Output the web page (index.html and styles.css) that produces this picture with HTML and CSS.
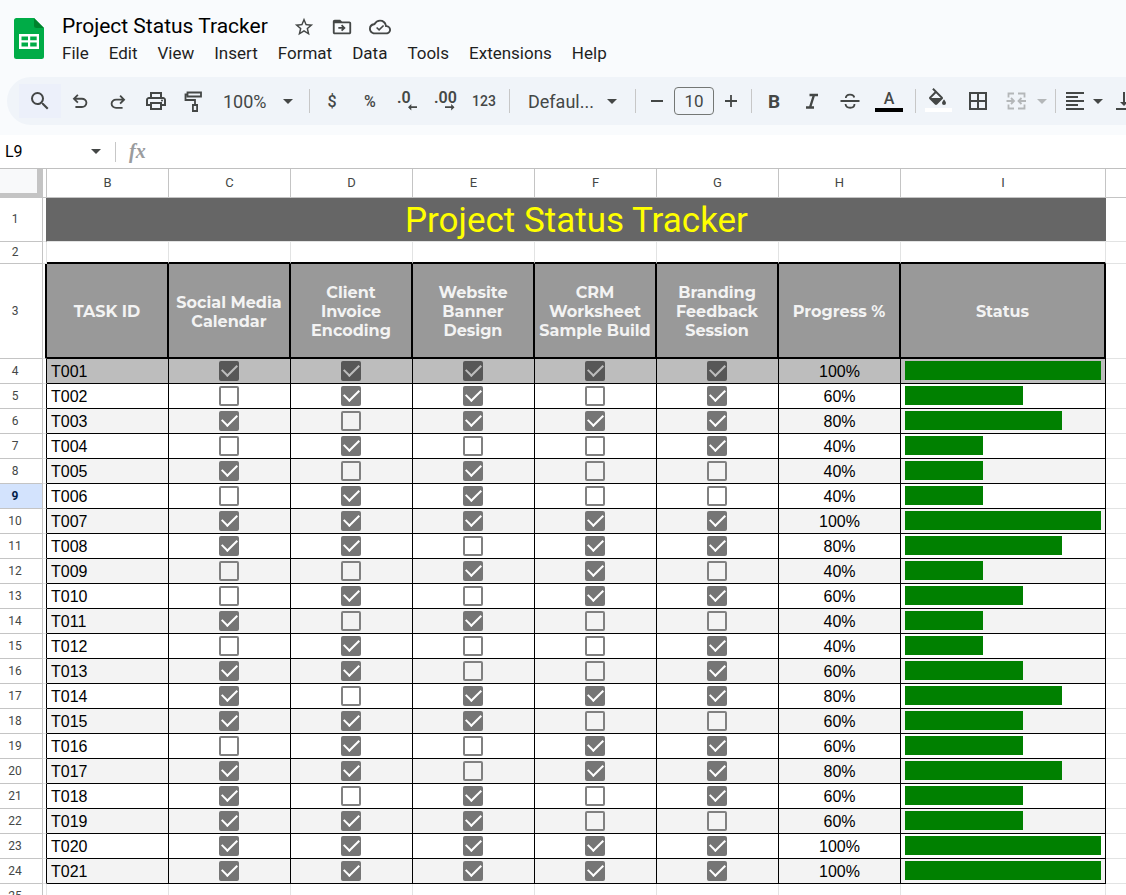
FILE: index.html
```html
<!DOCTYPE html>
<html lang="en">
<head>
    <meta charset="UTF-8">
    <meta name="viewport" content="width=device-width, initial-scale=1.0">
    <title>Project Status Tracker</title>
    <link rel="stylesheet" href="styles.css">
</head>
<body>
    <div class="app">
        <header class="doc-header">
            <svg class="logo" viewBox="0 0 30 41" aria-hidden="true">
                <path fill="#00ac47" d="M2.500 0H20L30 10V38.500A2.500 2.500 0 0 1 27.500 41H2.500A2.500 2.500 0 0 1 0 38.500V2.500A2.500 2.500 0 0 1 2.500 0Z"/>
                <path fill="#00832d" d="M20 0 30 10H22.500A2.500 2.500 0 0 1 20 7.500Z"/>
                <path fill="#fff" fill-rule="evenodd" d="M5 16H25V31H5ZM7.500 18.500V22.300H14V18.500ZM16.200 18.500V22.300H22.700V18.500ZM7.500 24.600V28.500H14V24.600ZM16.200 24.600V28.500H22.700V24.600Z"/>
            </svg>
            <div class="doc-info">
                <div class="doc-title">
                    <h1>Project Status Tracker</h1>
                    <button class="title-button" aria-label="Star">
                        <svg class="icon-md" viewBox="0 0 24 24"><path d="M22 9.240l-7.190-.62L12 2 9.190 8.630 2 9.240l5.460 4.730L5.820 21 12 17.270 18.180 21l-1.630-7.030L22 9.240zM12 15.400l-3.760 2.270 1-4.280-3.320-2.880 4.380-.38L12 6.100l1.710 4.040 4.380.38-3.320 2.880 1 4.280L12 15.400z"/></svg>
                    </button>
                    <button class="title-button" aria-label="Move">
                        <svg class="icon-md" viewBox="0 0 24 24"><path d="M20 6h-8l-2-2H4c-1.100 0-2 .9-2 2v12c0 1.100.9 2 2 2h16c1.100 0 2-.9 2-2V8c0-1.100-.9-2-2-2zm0 12H4V8h16v10z"/><path d="M8 12h4.200l-1.300-1.300L12.200 9.300 16 13l-3.800 3.700-1.300-1.400L12.200 14H8z"/></svg>
                    </button>
                    <button class="title-button" aria-label="Saved to Drive">
                        <svg class="icon-md" viewBox="0 0 24 24"><path d="M19.350 10.040A7.490 7.490 0 0 0 12 4C9.110 4 6.600 5.640 5.350 8.040A5.994 5.994 0 0 0 0 14c0 3.310 2.690 6 6 6h13c2.760 0 5-2.240 5-5 0-2.640-2.050-4.780-4.650-4.960zM19 18H6c-2.210 0-4-1.790-4-4 0-2.050 1.530-3.760 3.560-3.970l1.070-.11.5-.95A5.469 5.469 0 0 1 12 6c2.620 0 4.880 1.860 5.390 4.430l.3 1.500 1.530.11A2.980 2.980 0 0 1 22 15c0 1.650-1.350 3-3 3z"/><path d="M8.900 11.900 11 14l4.300-4.300 1.200 1.200L11 16.400 7.700 13.100z"/></svg>
                    </button>
                </div>
                <nav class="menu">
                    <a href="#">File</a>
                    <a href="#">Edit</a>
                    <a href="#">View</a>
                    <a href="#">Insert</a>
                    <a href="#">Format</a>
                    <a href="#">Data</a>
                    <a href="#">Tools</a>
                    <a href="#">Extensions</a>
                    <a href="#">Help</a>
                </nav>
            </div>
        </header>

        <div class="toolbar">
            <button class="tool search" aria-label="Search the menus">
                <svg class="icon-lg" viewBox="0 0 24 24"><path d="M15.500 14h-.79l-.28-.27A6.471 6.471 0 0 0 16 9.500 6.500 6.500 0 1 0 9.500 16c1.610 0 3.090-.59 4.230-1.570l.27.28v.79l5 4.990L20.490 19l-4.990-5zm-6 0C7.010 14 5 11.990 5 9.500S7.010 5 9.500 5 14 7.010 14 9.500 11.990 14 9.500 14z"/></svg>
            </button>
            <button class="tool" aria-label="Undo">
                <svg class="icon-md" viewBox="0 -980 960 960"><path d="M280-200v-80h284q63 0 109.500-40T720-420q0-60-46.500-100T564-560H312l104 104-56 56-200-200 200-200 56 56-104 104h252q97 0 166.500 63T800-420q0 94-69.500 157T564-200H280Z"/></svg>
            </button>
            <button class="tool" aria-label="Redo">
                <svg class="icon-md" viewBox="0 -980 960 960"><path d="M396-200q-97 0-166.500-63T160-420q0-94 69.500-157T396-640h252L544-744l56-56 200 200-200 200-56-56 104-104H396q-63 0-109.500 40T240-420q0 60 46.500 100T396-280h284v80H396Z" transform="translate(0 40)"/></svg>
            </button>
            <button class="tool" aria-label="Print">
                <svg class="icon-lg" viewBox="0 0 24 24"><path d="M19 8h-1V3H6v5H5c-1.660 0-3 1.340-3 3v6h4v4h12v-4h4v-6c0-1.660-1.340-3-3-3zM8 5h8v3H8V5zm8 12v2H8v-4h8v2zm2-2v-2H6v2H4v-4c0-.55.45-1 1-1h14c.55 0 1 .45 1 1v4h-2z"/><circle cx="18" cy="11.500" r="1"/></svg>
            </button>
            <button class="tool" aria-label="Paint format">
                <svg class="icon-lg line" viewBox="0 0 24 24"><path d="M5.500 3.500H19V7.500H5.500ZM5.500 5.500H3.500V11H13V15.500M10.900 16H15.100V22H10.900Z"/></svg>
            </button>
            <label class="dropdown zoom">
                <select aria-label="Zoom">
                    <option>100%</option>
                </select>
                <svg class="arrow" viewBox="0 0 10 5"><path d="M0 0H10L5 5Z"/></svg>
            </label>
            <span class="divider"></span>
            <button class="tool" aria-label="Format as currency">$</button>
            <button class="tool" aria-label="Format as percent">%</button>
            <button class="tool" aria-label="Decrease decimal places">
                <svg class="icon-lg" viewBox="0 0 24 24"><text x="1" y="14">.0</text><path d="M12 18.200 15.300 14.900V17.300H21V19.100H15.300V21.500Z"/></svg>
            </button>
            <button class="tool" aria-label="Increase decimal places">
                <svg class="icon-lg" viewBox="0 0 24 24"><text x="0" y="14">.00</text><path d="M20.500 18.200 17.200 14.900V17.300H11V19.100H17.200V21.500Z"/></svg>
            </button>
            <button class="tool small" aria-label="More formats">123</button>
            <span class="divider"></span>
            <label class="dropdown font">
                <select aria-label="Font">
                    <option>Defaul...</option>
                </select>
                <svg class="arrow" viewBox="0 0 10 5"><path d="M0 0H10L5 5Z"/></svg>
            </label>
            <span class="divider"></span>
            <div class="stepper">
                <button class="step" aria-label="Decrease font size">
                    <svg class="icon-lg line" viewBox="0 0 24 24"><path d="M6 12H18"/></svg>
                </button>
                <input type="text" value="10" aria-label="Font size">
                <button class="step" aria-label="Increase font size">
                    <svg class="icon-lg line" viewBox="0 0 24 24"><path d="M6 12H18M12 6V18"/></svg>
                </button>
            </div>
            <span class="divider"></span>
            <button class="tool bold" aria-label="Bold">B</button>
            <button class="tool" aria-label="Italic">
                <svg class="icon-lg line thick" viewBox="0 0 24 24"><path d="M9.500 6H18M6 18.500H14M14 6 10 18.500"/></svg>
            </button>
            <button class="tool" aria-label="Strikethrough">
                <svg class="icon-lg line" viewBox="0 0 24 24"><path d="M2.500 12H21.500M7.800 9C8 4.700 15.500 4.500 16.300 8.500M7.500 15C8 20 16.500 20 16.500 15"/></svg>
            </button>
            <button class="tool wide" aria-label="Text color">
                <svg class="swatch" viewBox="0 0 28 24"><text class="letter" x="14" y="15" text-anchor="middle">A</text><path fill="#000" d="M0 19H28V23H0Z"/></svg>
            </button>
            <span class="divider"></span>
            <button class="tool wide" aria-label="Fill color">
                <svg class="swatch" viewBox="0 0 28 24"><path d="M17.560 7.940 8.620-1 7.210.41l2.380 2.380-5.150 5.150a1.490 1.490 0 0 0 0 2.120l5.500 5.500c.29.290.68.44 1.060.44s.77-.15 1.060-.44l5.500-5.500c.59-.58.59-1.530 0-2.120zM6.210 9 11 4.210 15.790 9H6.210zM19 10.500s-2 2.170-2 3.500a2 2 0 0 0 4 0c0-1.330-2-3.500-2-3.500z"/><path fill="#fff" d="M0 19H27V23H0Z"/></svg>
            </button>
            <button class="tool" aria-label="Borders">
                <svg class="icon-lg" viewBox="0 0 24 24"><path d="M3 3v18h18V3H3zm8 16H5v-6h6v6zm0-8H5V5h6v6zm8 8h-6v-6h6v6zm0-8h-6V5h6v6z"/></svg>
            </button>
            <button class="tool faded" aria-label="Merge cells">
                <svg class="icon-lg line" viewBox="0 0 24 24"><path d="M10 4.500H4.500V8.500M10 19.500H4.500V15.500M14 4.500H20.500V8.500M14 19.500H20.500V15.500M2.500 12H9.500M7 9 10 12 7 15M22 12H15M17.500 9 14.500 12 17.500 15"/></svg>
            </button>
            <button class="tool caret faded" aria-label="Merge type">
                <svg class="arrow" viewBox="0 0 10 5"><path d="M0 0H10L5 5Z"/></svg>
            </button>
            <span class="divider"></span>
            <button class="tool align" aria-label="Horizontal align">
                <svg class="icon-lg" viewBox="0 0 24 24"><path d="M15 15H3v2h12v-2zm0-8H3v2h12V7zM3 13h18v-2H3v2zm0 8h18v-2H3v2zM3 3v2h18V3H3z"/></svg>
            </button>
            <button class="tool caret" aria-label="Align options">
                <svg class="arrow" viewBox="0 0 10 5"><path d="M0 0H10L5 5Z"/></svg>
            </button>
            <button class="tool" aria-label="Vertical align">
                <svg class="icon-lg" viewBox="0 0 24 24"><path d="M16 13h-3V3h-2v10H8l4 4 4-4zM4 19v2h16v-2H4z"/></svg>
            </button>
        </div>

        <div class="formula-bar">
            <input class="name-box" type="text" value="L9" aria-label="Name box">
            <button class="name-menu" aria-label="Named ranges">
                <svg class="arrow" viewBox="0 0 10 5"><path d="M0 0H10L5 5Z"/></svg>
            </button>
            <span class="divider"></span>
            <label class="fx" for="formula">fx</label>
            <input class="formula" id="formula" type="text">
        </div>

        <main class="sheet">
            <table>
                <colgroup>
                    <col class="col-num">
                    <col class="col-a">
                    <col class="col-data" span="7">
                    <col class="col-status">
                    <col>
                </colgroup>
                <thead>
                    <tr class="letters">
                        <th class="corner"></th>
                        <th></th>
                        <th>B</th>
                        <th>C</th>
                        <th>D</th>
                        <th>E</th>
                        <th>F</th>
                        <th>G</th>
                        <th>H</th>
                        <th>I</th>
                        <th></th>
                    </tr>
                </thead>
                <tbody id="rows">
                    <tr class="banner">
                        <th class="num">1</th>
                        <td></td>
                        <td class="banner-text" colspan="8">Project Status Tracker</td>
                        <td></td>
                    </tr>
                    <tr class="spacer">
                        <th class="num">2</th>
                        <td></td>
                        <td></td>
                        <td></td>
                        <td></td>
                        <td></td>
                        <td></td>
                        <td></td>
                        <td></td>
                        <td></td>
                        <td></td>
                    </tr>
                    <tr class="headings">
                        <th class="num">3</th>
                        <td></td>
                        <th>TASK ID</th>
                        <th>Social Media<br>Calendar</th>
                        <th>Client<br>Invoice<br>Encoding</th>
                        <th>Website<br>Banner<br>Design</th>
                        <th>CRM<br>Worksheet<br>Sample Build</th>
                        <th>Branding<br>Feedback<br>Session</th>
                        <th>Progress %</th>
                        <th>Status</th>
                        <td></td>
                    </tr>
                </tbody>
            </table>
        </main>
    </div>

    <script>
        // One entry per task, one digit per tick box (columns C to G)
        const tasks = [
            '11111', '01101', '10111', '01001', '10100', '01100', '11111',
            '11011', '00110', '01011', '10100', '01001', '11001', '10111',
            '11100', '01011', '11011', '10101', '11100', '11111', '11111'
        ];
        const names = ['Social Media Calendar', 'Client Invoice Encoding', 'Website Banner Design', 'CRM Worksheet Sample Build', 'Branding Feedback Session'];
        const firstRow = 4;
        const activeRow = 9;
        const body = document.getElementById('rows');

        tasks.forEach((boxes, i) => {
            const id = 'T' + String(i + 1).padStart(3, '0');
            const rowNumber = firstRow + i;
            const done = [...boxes].filter(b => b === '1').length;
            const percent = done / boxes.length * 100;

            const cells = [...boxes].map((b, n) =>
                `<td class="check"><input type="checkbox" aria-label="${id} ${names[n]}" ${b === '1' ? 'checked' : ''}></td>`
            ).join('');

            const tr = document.createElement('tr');
            tr.className = i === 0 ? 'task shaded' : 'task';
            tr.innerHTML = `
                <th class="num ${rowNumber === activeRow ? 'active' : ''}">${rowNumber}</th>
                <td></td>
                <td class="task-id">${id}</td>
                ${cells}
                <td class="progress">${percent}%</td>
                <td class="status"><div class="bar" style="width: ${percent}%"></div></td>
                <td></td>`;
            body.appendChild(tr);
        });

        // Empty row below the data
        const last = document.createElement('tr');
        last.className = 'empty';
        last.innerHTML = `<th class="num">${firstRow + tasks.length}</th>` + '<td></td>'.repeat(10);
        body.appendChild(last);
    </script>
</body>
</html>
```
FILE: styles.css
```css
* {
    box-sizing: border-box;
}

body {
    margin: 0;
    background: #f9fbfd;
    color: #1f1f1f;
    font-family: 'Google Sans', Roboto, sans-serif;
}

button,
input,
select {
    margin: 0;
    padding: 0;
    border: none;
    background: none;
    color: inherit;
    font: inherit;
}

svg {
    display: block;
    flex: none;
    fill: currentColor;
}

.app {
    display: flex;
    flex-direction: column;
    height: 100vh;
    overflow: hidden;
}

/* Header */
.doc-header {
    display: flex;
    flex: none;
    gap: 18px;
    padding: 12px 14px 11px;
}

.logo {
    width: 30px;
    height: 41px;
    margin-top: 6px;
}

.doc-title {
    display: flex;
    align-items: center;
    height: 28px;
}

.doc-title h1 {
    margin: 0 17px 0 0;
    font-size: 21px;
    font-weight: 400;
    line-height: 28px;
    color: #000;
}

.title-button {
    display: flex;
    justify-content: center;
    width: 38px;
    padding-top: 2px;
    color: #444746;
}

.icon-md {
    width: 22px;
    height: 22px;
}

.icon-lg {
    width: 24px;
    height: 24px;
}

.line {
    fill: none;
    stroke: currentColor;
    stroke-width: 1.8;
}

.thick {
    stroke-width: 2.4;
}

.menu {
    display: flex;
    gap: 20px;
    font-size: 17px;
    line-height: 26px;
}

.menu a {
    color: inherit;
    text-decoration: none;
}

/* Toolbar */
.toolbar {
    display: flex;
    flex: none;
    align-items: center;
    height: 48px;
    margin-left: 7px;
    padding-left: 12px;
    overflow: hidden;
    border-radius: 24px 0 0 24px;
    background: #f0f4f9;
    color: #444746;
}

.tool {
    display: flex;
    flex: none;
    align-items: center;
    justify-content: center;
    width: 38px;
    height: 34px;
    font-size: 16px;
    font-weight: 500;
}

.tool text {
    font-size: 16px;
    font-weight: 600;
}

.tool .letter {
    font-weight: 500;
}

.tool.search {
    width: 42px;
    background: #ecf0fa;
}

.tool.small {
    font-size: 14px;
}

.tool.bold {
    font-size: 19px;
    font-weight: 700;
}

.tool.wide {
    width: 40px;
}

.tool.align {
    width: 32px;
}

.tool.caret {
    width: 14px;
}

.tool.faded {
    color: #b4b7b9;
}

.tool svg {
    overflow: visible;
}

.swatch {
    width: 28px;
    height: 24px;
}

.arrow {
    width: 10px;
    height: 5px;
}

.divider {
    flex: none;
    width: 1px;
    height: 24px;
    margin: 0 3px 0 6px;
    background: #c7c7c7;
}

.dropdown {
    display: flex;
    flex: none;
    align-items: center;
    font-size: 18px;
}

.dropdown select {
    flex: 1;
    min-width: 0;
    appearance: none;
}

.zoom {
    width: 90px;
    padding: 0 10px;
}

.font {
    width: 116px;
    padding: 0 12px 0 15px;
}

.stepper {
    display: flex;
    flex: none;
    align-items: center;
    gap: 3px;
    padding-left: 4px;
}

.step {
    display: flex;
    justify-content: center;
    width: 28px;
}

.stepper input {
    width: 40px;
    height: 28px;
    border: 1px solid #747775;
    border-radius: 4px;
    font-size: 17px;
    text-align: center;
}

/* Formula bar */
.formula-bar {
    display: flex;
    flex: none;
    align-items: center;
    height: 34px;
    margin-top: 10px;
    padding-left: 5px;
    border-bottom: 1px solid #c0c0c0;
    background: #fff;
    color: #444746;
}

.name-box {
    width: 80px;
    font-size: 16px;
    color: #000;
}

.name-menu {
    display: flex;
    justify-content: center;
    width: 22px;
}

.formula-bar .divider {
    height: 20px;
    margin: 0 13px 0 8px;
}

.fx {
    font: italic bold 20px 'Liberation Serif', serif;
    color: #9a9c9e;
}

.formula {
    flex: 1;
    margin-left: 12px;
}

/* Sheet */
.sheet {
    flex: 1;
    min-height: 0;
    overflow: hidden;
    background: #fff;
}

table {
    width: 100%;
    table-layout: fixed;
    border-collapse: separate;
    border-spacing: 0;
}

th,
td {
    padding: 0;
    border: 0 solid #e2e3e3;
    border-width: 0 1px 1px 0;
}

tr > :last-child {
    border-right: none;
}

.col-num {
    width: 43px;
}

.col-a {
    width: 4px;
}

.col-data {
    width: 122px;
}

.col-status {
    width: 205px;
}

.letters th {
    height: 29px;
    padding-bottom: 2px;
    border-color: #c4c4c4;
    font-size: 13px;
    font-weight: 400;
    color: #444746;
}

.letters .corner {
    border-width: 0 6px 5px 0;
    background: #f8f9fa;
}

.num {
    padding: 0 12px 1px 0;
    border-color: #c4c4c4;
    font-size: 12px;
    font-weight: 400;
    color: #444746;
}

.num.active {
    background: #d3e3fd;
    font-weight: 700;
    color: #041e49;
}

.banner td {
    height: 44px;
}

.banner td:nth-child(2) {
    border-right-color: #666;
}

.banner .banner-text {
    padding-top: 2px;
    border-right: none;
    background: #666;
    color: #ff0;
    font: 35px/40px Roboto, sans-serif;
    text-align: center;
}

.spacer td {
    height: 22px;
}

.spacer td:nth-child(n+3):nth-child(-n+10) {
    border-bottom: 2px solid #000;
}

.headings th:not(.num) {
    height: 95px;
    padding-top: 2px;
    border: 0 solid #000;
    border-width: 0 2px 2px 0;
    background: #999;
    color: #f3f3f3;
    font: 700 16px/19px Montserrat, Inter, sans-serif;
}

.headings td:nth-child(2) {
    border-right: 2px solid #000;
}

.task td {
    height: 25px;
    padding-top: 1px;
    border-color: #000;
    font: 16px/18px 'Liberation Sans', Arial, sans-serif;
    color: #000;
}

.task td:nth-child(2) {
    border-bottom-color: #e2e3e3;
}

.task td:last-child {
    border-color: #e2e3e3;
}

.task:nth-child(even) td:nth-child(n+3):nth-child(-n+10) {
    background: #f3f3f3;
}

.task.shaded td:nth-child(n+3):nth-child(-n+10) {
    background: #bdbdbd;
}

.task .task-id {
    padding-left: 4px;
}

.task .progress {
    text-align: center;
}

.task .status {
    padding: 2px 4px 3px;
}

.task .check {
    padding: 0;
}

.bar {
    height: 19px;
    background: #008000;
}

.check input {
    display: grid;
    place-content: center;
    width: 20px;
    height: 20px;
    margin: 0 auto;
    border: 2px solid #808080;
    border-radius: 2px;
    appearance: none;
}

.task .check {
    padding-right: 1px;
}

.check input:checked {
    border-color: #757575;
    background: #757575;
}

.check input:checked::after {
    content: '';
    width: 7px;
    height: 13px;
    margin-bottom: 5px;
    border: solid #fff;
    border-width: 0 2px 2px 0;
    transform: rotate(45deg);
}

.shaded .check input:checked {
    border-color: #575757;
    background: #575757;
}

.shaded .check input:checked::after {
    border-color: #bdbdbd;
}

.empty td,
.empty th {
    height: 25px;
}
```
